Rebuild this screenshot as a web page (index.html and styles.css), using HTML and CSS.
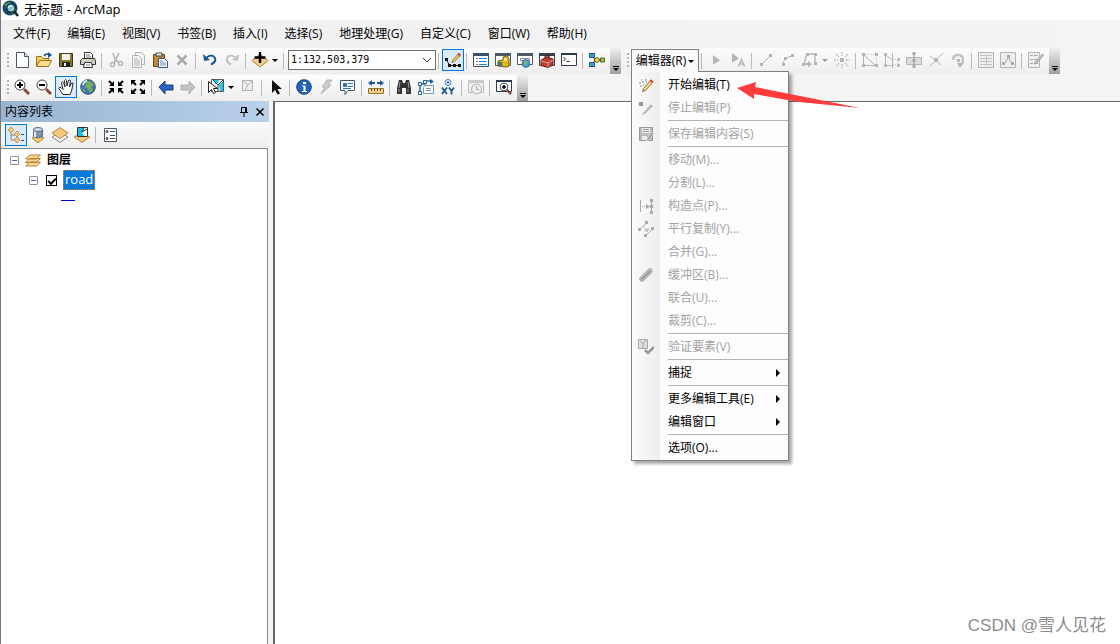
FILE: index.html
```html
<!DOCTYPE html>
<html lang="zh-CN">
<head>
<meta charset="utf-8">
<title>无标题 - ArcMap</title>
<link rel="stylesheet" href="styles.css">
</head>
<body>
<div class="app">
  <header class="titlebar">
    <svg class="logo" viewBox="0 0 18 18"><circle cx="8" cy="8" r="7.5" fill="#17476b"/><path d="M3 4l4-2 3 2-2 3-4 1zM8 9l4-3 2 4-4 4z" fill="#55a05b"/><circle cx="9" cy="8" r="4.2" fill="#a6e2f5" fill-opacity=".75" stroke="#08263e" stroke-width="1.3"/><path d="M12 11l4 5" stroke="#222" stroke-width="2.6"/><path d="M6 8q1-3 4-2" stroke="#fff" fill="none"/></svg>
    <h1 class="title">无标题 - ArcMap</h1>
  </header>

  <nav class="menubar">
    <button class="menu">文件(F)</button>
    <button class="menu">编辑(E)</button>
    <button class="menu">视图(V)</button>
    <button class="menu">书签(B)</button>
    <button class="menu">插入(I)</button>
    <button class="menu">选择(S)</button>
    <button class="menu">地理处理(G)</button>
    <button class="menu">自定义(C)</button>
    <button class="menu">窗口(W)</button>
    <button class="menu">帮助(H)</button>
  </nav>

  <div class="toolrows">
    <div class="toolrow">
      <div class="strip">
        <span class="grip"></span>
        <button class="tool" aria-label="新建"><svg viewBox="0 0 16 16"><path d="M2.500.5h8l4 4v11h-12z" fill="#fff" stroke="#4a5568"/><path d="M10.500.5v4h4" fill="#dce6f2" stroke="#4a5568"/></svg></button>
        <button class="tool" aria-label="打开"><svg viewBox="0 0 16 16"><path d="M.5 14.500v-10h5l1.500 2h6v3" fill="#f3cf68" stroke="#9a7416"/><path d="M.5 14.500l3-6h12l-3 6z" fill="#fbe08c" stroke="#9a7416"/><path d="M8 4q2-3 5-1.500" fill="none" stroke="#174f86" stroke-width="1.500"/><path d="M12 0l4 3-4 3z" fill="#174f86"/></svg></button>
        <button class="tool" aria-label="保存"><svg viewBox="0 0 16 16"><path d="M1.500 1.500h13v13h-13z" fill="#8c7728" stroke="#40391b"/><path d="M4 2h8v6H4z" fill="#f4f3e9"/><path d="M4 10h8v5H4z" fill="#222"/><path d="M6 11h2v3H6z" fill="#eee"/></svg></button>
        <button class="tool" aria-label="打印"><svg viewBox="0 0 16 16"><path d="M4.500 6.500v-6h6l2 2v4" fill="#fff" stroke="#333"/><path d="M2.500 6.500h12l1 2v4h-15v-4z" fill="#d2d2cc" stroke="#333"/><path d="M4.500 10.500h7l1 5h-9z" fill="#fff" stroke="#333"/><path d="M6 3h4M6 5h5M6 13h4" stroke="#777"/><path d="M12 8h2v1h-2z" fill="#dca52a"/></svg></button>
        <span class="sep"></span>
        <button class="tool" disabled aria-label="剪切"><svg viewBox="0 0 16 16" fill="none" stroke="#b4b4b4" stroke-width="1.500"><path d="M5 1l3 9M11 1L6 11M8 8l3 3"/><circle cx="4.500" cy="12.500" r="2"/><circle cx="12.500" cy="11.500" r="2"/></svg></button>
        <button class="tool" disabled aria-label="复制"><svg viewBox="0 0 16 16" fill="#f3f3f3" stroke="#b4b4b4"><path d="M5.500.5h6l3 3v9h-9z"/><path d="M2.500 3.500h6l3 3v9h-9z"/><path d="M4 7h4M4 9h6M4 11h6M4 13h6"/></svg></button>
        <button class="tool" aria-label="粘贴"><svg viewBox="0 0 16 16"><path d="M1.500 2.500h11v12h-11z" fill="#c08a3a" stroke="#6c451a"/><path d="M4 1h6v3H4z" fill="#eee" stroke="#444"/><path d="M6.500 6.500h6l3 3v6h-9z" fill="#fff" stroke="#35577e"/><path d="M8 9h3M8 11h6M8 13h6" stroke="#5f85af"/></svg></button>
        <button class="tool" disabled aria-label="删除"><svg viewBox="0 0 16 16"><path d="M3.500 3.500l9 9M12.500 3.500l-9 9" stroke="#aaa" stroke-width="2.500"/></svg></button>
        <span class="sep"></span>
        <button class="tool" aria-label="撤消"><svg viewBox="0 0 16 16"><path d="M4 6q6-5 9 0 1.500 4-4 6.500" fill="none" stroke="#1e5a98" stroke-width="2"/><path d="M1 2l1 7 6-1z" fill="#1e5a98"/></svg></button>
        <button class="tool" disabled aria-label="恢复"><svg viewBox="0 0 16 16"><path d="M12 6q-6-5-9 0-1.500 4 4 6.500" fill="none" stroke="#c3c3c3" stroke-width="2"/><path d="M15 2l-1 7-6-1z" fill="#c3c3c3"/></svg></button>
        <span class="sep"></span>
        <button class="tool tool-drop" aria-label="添加数据"><svg viewBox="0 0 16 16"><path d="M0 8.500l8-6 8 6-8 6.500z" fill="#f5cf83" stroke="#ad8440"/><path d="M8 0v11M2.500 5.500h11" stroke="#000" stroke-width="2.400"/></svg><span class="caret"></span></button>
        <span class="sep"></span>
        <label class="scale"><select class="scale-select" aria-label="地图比例"><option>1:132,503,379</option></select><svg class="scale-arrow" viewBox="0 0 10 6"><path d="M1 1l4 4 4-4" fill="none" stroke="#444"/></svg></label>
        <span class="sep"></span>
        <button class="tool tool-on" aria-label="编辑器工具条"><svg viewBox="0 0 16 16"><path d="M1.500 7.500l3 6h9" fill="none" stroke="#222"/><path d="M0 6h3v3H0zM3 12h3v3H3zM8 12h3v3H8zM13 12h3v3h-3z" fill="#111"/><path d="M7.500 8.500l6-7 2 2-6 6-2.500 1z" fill="#f3c66a" stroke="#7f5b30" stroke-width=".7"/><path d="M12.500 2.500l1.500-2 2 2-1.500 2z" fill="#d85347"/></svg></button>
        <span class="sep"></span>
        <button class="tool" aria-label="内容列表"><svg viewBox="0 0 16 16"><path d="M.5 1.500h15v13H.5z" fill="#fff" stroke="#38516f"/><path d="M0 1h16v3H0z" fill="#38516f"/><path d="M3 6.500h2M3 9.500h2M3 12.500h2" stroke="#e04e35"/><path d="M6 6.500h8M6 9.500h7M6 12.500h8" stroke="#1686e0"/></svg></button>
        <button class="tool" aria-label="目录"><svg viewBox="0 0 16 16"><path d="M.5 1.500h15v12H.5z" fill="#fff" stroke="#4b5968"/><path d="M0 1h16v3H0z" fill="#4b5968"/><path d="M8 5l4-1 2 2v8l-3 1-8-1V9l5-1z" fill="#e2b51d" stroke="#7a6212"/><path d="M9 6h3v3H9z" fill="#fae896"/><circle cx="5" cy="12" r="2.500" fill="#51796b"/></svg></button>
        <button class="tool" aria-label="搜索"><svg viewBox="0 0 16 16"><path d="M.5 1.500h15v11H.5z" fill="#fff" stroke="#4b5968"/><path d="M0 1h16v3H0z" fill="#4b5968"/><path d="M3.500 6.500h9v2h-9z" fill="#fff" stroke="#888"/><circle cx="9" cy="11.500" r="4" fill="#4c95cc" stroke="#245580" stroke-width=".6"/><path d="M7 9l3 0 1 2-3 3z" fill="#79b975"/></svg></button>
        <button class="tool" aria-label="工具箱"><svg viewBox="0 0 16 16"><path d="M.5 1.500h15v12H.5z" fill="#fff" stroke="#384050"/><path d="M0 1h16v3H0z" fill="#384050"/><path d="M2 8l6-3 6 2v6l-5 2.500-7-2z" fill="#b73f32" stroke="#702019"/><path d="M2 9l7 2 5-3M9 11v4" fill="none" stroke="#e9a69b"/><path d="M6 6V4h4v2" fill="none" stroke="#501"/></svg></button>
        <button class="tool" aria-label="Python"><svg viewBox="0 0 16 16"><path d="M.5 1.500h15v12H.5z" fill="#fff" stroke="#30384c"/><path d="M0 1h16v2H0z" fill="#30384c"/><path d="M2.500 5l2 2-2 2M5.500 9.500h3" fill="none" stroke="#222"/></svg></button>
        <span class="sep"></span>
        <button class="tool" aria-label="模型构建器"><svg viewBox="0 0 16 16"><path d="M3 3l3 5-3 5M6 8h7" fill="none" stroke="#333"/><path d="M.5 1.500h5v4h-5zM.5 10.500h5v4h-5z" fill="#429bd3" stroke="#14588a"/><circle cx="8" cy="8" r="2.300" fill="#ffe35b" stroke="#5b4a12"/><path d="M11.500 6h4v4h-4z" fill="#9bc24e" stroke="#476d1b"/></svg></button>
        <button class="more" aria-label="工具条选项"></button>
      </div>

      <div class="strip">
        <span class="grip"></span>
        <div class="editor">
          <button class="editor-button" aria-haspopup="true" aria-expanded="true">编辑器(R)<span class="caret"></span></button>
          <div class="dropdown" role="menu">
            <button class="item" role="menuitem"><svg class="item-icon" viewBox="0 0 16 16"><path d="M5.500 11.500l7-8 2 2-7 8-3 1z" fill="#ffd988" stroke="#6b5020" stroke-width=".8"/><path d="M11.500 4L13 2.300l2.500 2L14 6z" fill="#d04a3a"/><path d="M1 6h2M4 5h2M7 3h2M2 9h2M5 8h1M8 5h1M3 3h1" stroke="#888"/></svg>开始编辑(T)</button>
            <button class="item" role="menuitem" disabled><svg class="item-icon" viewBox="0 0 16 16"><path d="M1 2h4v4H1z" fill="#999"/><path d="M5 13l8-9 2 2-8 8-3 1z" fill="#bbb"/></svg>停止编辑(P)</button>
            <hr class="rule">
            <button class="item" role="menuitem" disabled><svg class="item-icon" viewBox="0 0 16 16"><path d="M1.500 1.500h13v13h-13z" fill="#bbb" stroke="#999"/><path d="M4 2h8v5H4zM4 10h5v4H4z" fill="#eee"/><path d="M5 3.500h6M5 5.500h6" stroke="#999"/><path d="M9 13l5-7 2 1-5 7-3 1z" fill="#999" stroke="#eee" stroke-width=".6"/></svg>保存编辑内容(S)</button>
            <hr class="rule">
            <button class="item" role="menuitem" disabled>移动(M)...</button>
            <button class="item" role="menuitem" disabled>分割(L)...</button>
            <button class="item" role="menuitem" disabled><svg class="item-icon" viewBox="0 0 16 16"><path d="M2.500 2v12M13.500 2v12" stroke="#aaa"/><path d="M4 8.500h5" stroke="#aaa" stroke-dasharray="1 1"/><path d="M8 6l4 2.500L8 11zM12 1h3v3h-3zM12 7h3v3h-3zM12 13h3v3h-3z" fill="#aaa"/></svg>构造点(P)...</button>
            <button class="item" role="menuitem" disabled><svg class="item-icon" viewBox="0 0 16 16"><path d="M2 8l7-6M8 14l7-6" stroke="#aaa"/><path d="M6 7l4 3M10 7v3H7" fill="none" stroke="#aaa"/><path d="M0 7h3v3H0zM7 0h3v3H7zM6 13h3v3H6zM13 6h3v3h-3z" fill="#aaa"/></svg>平行复制(Y)...</button>
            <button class="item" role="menuitem" disabled>合并(G)...</button>
            <button class="item" role="menuitem" disabled><svg class="item-icon" viewBox="0 0 16 16"><path d="M4 12l8-8" stroke="#b5b5b5" stroke-width="5.500" stroke-linecap="round"/><path d="M4 12l8-8" stroke="#808080"/></svg>缓冲区(B)...</button>
            <button class="item" role="menuitem" disabled>联合(U)...</button>
            <button class="item" role="menuitem" disabled>裁剪(C)...</button>
            <hr class="rule">
            <button class="item" role="menuitem" disabled><svg class="item-icon" viewBox="0 0 16 16"><path d="M.5.5h9v9h-9z" fill="#ddd" stroke="#aaa"/><path d="M2 2l3 3 3-4M5 5v4" fill="none" stroke="#aaa"/><path d="M7 11l3 3 6-6" fill="none" stroke="#999" stroke-width="2.500"/></svg>验证要素(V)</button>
            <hr class="rule">
            <button class="item item-sub" role="menuitem">捕捉</button>
            <hr class="rule">
            <button class="item item-sub" role="menuitem">更多编辑工具(E)</button>
            <button class="item item-sub" role="menuitem">编辑窗口</button>
            <hr class="rule">
            <button class="item" role="menuitem">选项(O)...</button>
          </div>
        </div>
        <span class="sep"></span>
        <button class="tool" disabled aria-label="编辑工具"><svg viewBox="0 0 16 16"><path d="M5 3l7 5.500-7 4z" fill="#b4b4b4"/></svg></button>
        <button class="tool" disabled aria-label="编辑注记"><svg viewBox="0 0 16 16"><path d="M2 1l7 5.500-7 4z" fill="#b4b4b4"/><path d="M8.500 14.500l3-7 3 7M9.500 12h4" fill="none" stroke="#b4b4b4" stroke-width="1.500"/></svg></button>
        <span class="sep"></span>
        <button class="tool" disabled aria-label="直线段"><svg viewBox="0 0 16 16"><path d="M3 13L13 3" stroke="#b4b4b4"/><path d="M2 11h3v3H2zM11 2h3v3h-3z" fill="#b4b4b4"/></svg></button>
        <button class="tool" disabled aria-label="弧段"><svg viewBox="0 0 16 16"><path d="M3 13q0-8 10-9" fill="none" stroke="#b4b4b4"/><path d="M2 11h3v3H2zM4 5h3v3H4zM11 2h3v3h-3z" fill="#b4b4b4"/></svg></button>
        <button class="tool tool-drop" disabled aria-label="追踪"><svg viewBox="0 0 16 16"><path d="M2 12L5 2h8v9M2 12h4" fill="none" stroke="#b4b4b4" stroke-width="1.300"/><path d="M0 11h3v3H0zM4 1h3v3H4zM12 1h3v3h-3zM12 10h3v3h-3z" fill="#b4b4b4"/><path d="M7 9v6M4 12h6" stroke="#999"/></svg><span class="caret caret-off"></span></button>
        <button class="tool" disabled aria-label="点"><svg viewBox="0 0 16 16"><path d="M6 6h4v4H6z" fill="#b4b4b4"/><path d="M8 0v4M8 12v4M0 8h4M12 8h4M2 2l3 3M11 11l3 3M14 2l-3 3M5 11l-3 3" stroke="#c3c3c3" stroke-width="1.500" stroke-dasharray="2 1"/></svg></button>
        <span class="sep"></span>
        <button class="tool" disabled aria-label="编辑折点"><svg viewBox="0 0 16 16"><path d="M1.500 13.500v-11l12 11z" fill="none" stroke="#b4b4b4"/><path d="M3 2.500h11.500v11" fill="none" stroke="#ccc" stroke-dasharray="1 1"/><path d="M0 1h3v3H0zM0 12h3v3H0zM13 12h3v3h-3zM13 1h3v3h-3z" fill="#b4b4b4"/></svg></button>
        <button class="tool" disabled aria-label="整形要素"><svg viewBox="0 0 16 16"><path d="M1.500 2v11.500h6M1.500 3l6 4M8.500 1v15" fill="none" stroke="#b4b4b4"/><path d="M9 7l5 1v5H9" fill="none" stroke="#bbb" stroke-dasharray="1 1"/><path d="M0 1h3v3H0zM0 12h3v3H0zM13 6h3v3h-3zM13 12h3v3h-3z" fill="#bbb"/></svg></button>
        <button class="tool" disabled aria-label="裁剪面"><svg viewBox="0 0 16 16"><path d="M.5 5.500h15v7H.5z" fill="#ddd" stroke="#b4b4b4"/><path d="M8 1v15" stroke="#aaa" stroke-width="1.500"/><path d="M6.500 0h3v3h-3zM6.500 7h3v3h-3zM6.500 13h3v3h-3z" fill="#aaa"/></svg></button>
        <button class="tool" disabled aria-label="分割"><svg viewBox="0 0 16 16"><path d="M2 14L15 1" stroke="#b4b4b4"/><path d="M2 4l11 9" stroke="#b4b4b4" stroke-dasharray="4 1"/><path d="M6 6h4v4H6z" fill="#b4b4b4"/></svg></button>
        <button class="tool" disabled aria-label="旋转"><svg viewBox="0 0 16 16"><path d="M3 8q0-5 5-5t5 5q0 4-4 6" fill="none" stroke="#c3c3c3" stroke-width="2.500"/><path d="M7 11l6 0-3 5zM7 7h3v3H7z" fill="#b4b4b4"/></svg></button>
        <span class="sep"></span>
        <button class="tool" disabled aria-label="属性"><svg viewBox="0 0 16 16"><path d="M.5.5h15v15H.5z" fill="#eee" stroke="#b4b4b4"/><path d="M2 3.500h12M2 6.500h12M2 9.500h12M2 12.500h12M8.500 2v12" stroke="#c3c3c3"/></svg></button>
        <button class="tool" disabled aria-label="草图属性"><svg viewBox="0 0 16 16"><path d="M.5.5h15v15H.5z" fill="#eee" stroke="#b4b4b4"/><path d="M3 12l3-2 2-5 3 5 2 2" fill="none" stroke="#aaa"/><path d="M2 10h3v3H2zM7 3h3v3H7zM11 10h3v3h-3z" fill="#aaa"/></svg></button>
        <span class="sep"></span>
        <button class="tool" disabled aria-label="创建要素"><svg viewBox="0 0 16 16"><path d="M.5.5h11v15H.5z" fill="#eee" stroke="#b4b4b4"/><path d="M2 3.500h3M2 7.500h3M2 11.500h3M6 3.500h4M6 7.500h3M6 11.500h4" stroke="#aaa"/><path d="M7 10l7-8 2 1-7 8-3 1z" fill="#bbb" stroke="#999" stroke-width=".5"/></svg></button>
        <button class="more" aria-label="工具条选项"></button>
      </div>
    </div>

    <div class="toolrow">
      <div class="strip">
        <span class="grip"></span>
        <button class="tool" aria-label="放大"><svg viewBox="0 0 16 16"><path d="M10 10l5 5" stroke="#8a4b3c" stroke-width="3"/><circle cx="6" cy="6" r="5" fill="#fff" stroke="#444"/><path d="M6 3v6M3 6h6" stroke="#000" stroke-width="2"/></svg></button>
        <button class="tool" aria-label="缩小"><svg viewBox="0 0 16 16"><path d="M10 10l5 5" stroke="#8a4b3c" stroke-width="3"/><circle cx="6" cy="6" r="5" fill="#fff" stroke="#444"/><path d="M3 6h6" stroke="#000" stroke-width="2"/></svg></button>
        <button class="tool tool-on" aria-label="平移"><svg viewBox="0 0 16 16"><path d="M5 15.500L1 9.500q0-2 2-1l2 2L3.500 3.500q1-2 2 0L7 8 6.500 1.500q1-2 2 0L9 7l1.500-5.500q2-1 2 0L11.500 8l2-4q2-.5 1.500 1L13.500 12l-1.500 3.500z" fill="#fff" stroke="#222"/></svg></button>
        <button class="tool" aria-label="全图"><svg viewBox="0 0 16 16"><circle cx="8" cy="8" r="7.300" fill="#3f78b8" stroke="#394d69"/><path d="M7 2l5 1 2 3-3 2 2 3-3 3-2-4-3-2zM1 9l4 2v3z" fill="#74b050"/><path d="M3 6q1-4 4-4" stroke="#d4edf9" stroke-width="2" fill="none"/></svg></button>
        <span class="sep"></span>
        <button class="tool" aria-label="固定比例放大"><svg viewBox="0 0 16 16"><path d="M1 2l4 4M15 2l-4 4M1 14l4-4M15 14l-4-4" stroke="#000" stroke-width="2"/><path d="M6 2v5H1zM10 2v5h5zM6 14V9H1zM10 14V9h5z"/></svg></button>
        <button class="tool" aria-label="固定比例缩小"><svg viewBox="0 0 16 16"><path d="M2 2l4 4M14 2l-4 4M2 14l4-4M14 14l-4-4" stroke="#000" stroke-width="2"/><path d="M1 1v5l5-5zM15 1v5l-5-5zM1 15v-5l5 5zM15 15v-5l-5 5z"/></svg></button>
        <span class="sep"></span>
        <button class="tool" aria-label="后退"><svg viewBox="0 0 16 16"><path d="M1 8l6-6v4h8v5H7v4z" fill="#2b62c4" stroke="#183b88"/></svg></button>
        <button class="tool" disabled aria-label="前进"><svg viewBox="0 0 16 16"><path d="M15 8L9 2v4H1v5h8v4z" fill="#c3c3c3" stroke="#b1b1b1"/></svg></button>
        <span class="sep"></span>
        <button class="tool tool-drop" aria-label="选择要素"><svg viewBox="0 0 16 16"><path d="M3.500.5h12v12h-12z" fill="#fff" stroke="#555"/><path d="M5 1h6l-1 3-3 1zM11 6l4-4v10h-3z" fill="#22c7e8"/><path d="M5 1l5 5 5-5M10 6v6" fill="none" stroke="#345"/><path d="M.5 2.500v11l3-3 2 4 2-1-2-4h4z" fill="#fff" stroke="#222"/></svg><span class="caret"></span></button>
        <button class="tool" disabled aria-label="清除选择"><svg viewBox="0 0 16 16"><path d="M2.500 1.500h10v10h-10z" fill="#eee" stroke="#b4b4b4"/><path d="M3 2l5 4 4-4M8 6l-3 5" fill="none" stroke="#b4b4b4"/></svg></button>
        <span class="sep"></span>
        <button class="tool" aria-label="选择元素"><svg viewBox="0 0 16 16"><path d="M4 1v13l3-3 2.500 4.500 2.500-1L9.500 10H14z" fill="#111"/></svg></button>
        <span class="sep"></span>
        <button class="tool" aria-label="识别"><svg viewBox="0 0 16 16"><circle cx="8" cy="8" r="7.300" fill="#2462be" stroke="#133e82"/><path d="M7 3h3v2H7zM6 6.500h3.500V12H11v1H6v-1h1.500V7.500H6z" fill="#fff"/></svg></button>
        <button class="tool" disabled aria-label="超链接"><svg viewBox="0 0 16 16"><path d="M9 1h5l-4 5h3L3 15l4-7H4z" fill="#ccc" stroke="#b4b4b4"/></svg></button>
        <button class="tool" aria-label="HTML 弹出窗口"><svg viewBox="0 0 16 16"><path d="M.5 1.500h14v10H8l-3 4v-4H.5z" fill="#fff" stroke="#425464"/><path d="M3 4h4v4H3z" fill="#237bc2"/><path d="M8 4.500h5M8 7.500h5M3 9.500h8" stroke="#237bc2"/></svg></button>
        <span class="sep"></span>
        <button class="tool" aria-label="测量"><svg viewBox="0 0 16 16"><path d="M0 4l4-3v2h3v2H4v2zM16 4l-4-3v2H9v2h3v2z" fill="#205c9d"/><path d="M.5 9.500h15v5H.5z" fill="#f2d08b" stroke="#987031"/><path d="M3.500 10v2M6.500 10v2M9.500 10v2M12.500 10v2" stroke="#765321"/></svg></button>
        <span class="sep"></span>
        <button class="tool" aria-label="查找"><svg viewBox="0 0 16 16"><path d="M3 1h3l1 3h2l1-3h3l2 8v6h-5V9H6v6H1V9z" fill="#333"/><path d="M4 3L3 9M12 3l1 6M3 10v3M12 10v3" stroke="#999"/></svg></button>
        <button class="tool" aria-label="查找路径"><svg viewBox="0 0 16 16"><path d="M2 12V5h5V2h6" fill="none" stroke="#2072a5" stroke-width="1.500"/><path d="M12 0l4 2.500L12 5z" fill="#205c9d"/><path d="M.5 3.500h3v3h-3zM.5 12.500h3v3h-3zM5.500 1.500h3v3h-3z" fill="#fff" stroke="#205c9d"/><path d="M5.500 8.500l1-2h9v8h-10z" fill="#fff" stroke="#7f96a6"/><path d="M8 9.500h5M8 11.500h5" stroke="#7f96a6"/></svg></button>
        <button class="tool" aria-label="转到 XY"><svg viewBox="0 0 16 16"><circle cx="8" cy="3.500" r="3" fill="#fff" stroke="#277fc0"/><circle cx="8" cy="3.500" r="1.200" fill="#205c9d"/><path d="M2 8.500l5 6.500M7 8.500L2 15M9 8.500l2.500 3.500L14 8.500M11.500 12v3.500" fill="none" stroke="#19588c" stroke-width="1.800"/></svg></button>
        <span class="sep"></span>
        <button class="tool" disabled aria-label="时间滑块"><svg viewBox="0 0 16 16"><path d="M.5 1.500h15v12H.5z" fill="#eee" stroke="#bbb"/><path d="M0 1h16v3H0z" fill="#ccc"/><circle cx="8.500" cy="10" r="5" fill="#eee" stroke="#b4b4b4"/><path d="M8.500 7v3.500h3" fill="none" stroke="#aaa"/></svg></button>
        <span class="sep"></span>
        <button class="tool" aria-label="查看器窗口"><svg viewBox="0 0 16 16"><path d="M.5 1.500h15v11H.5z" fill="#fff" stroke="#30384c"/><path d="M0 1h16v2H0z" fill="#30384c"/><path d="M11 11l4 4" stroke="#8a4b3c" stroke-width="2.500"/><circle cx="8" cy="8" r="3.800" fill="#fff" stroke="#444"/><path d="M8 6v4M6 8h4" stroke="#000" stroke-width="1.500"/></svg></button>
        <button class="more" aria-label="工具条选项"></button>
      </div>
    </div>
  </div>

  <main class="work">
    <aside class="toc">
      <div class="toc-head">
        <h2 class="toc-title">内容列表</h2>
        <button class="toc-action" aria-label="自动隐藏"><svg viewBox="0 0 10 10"><path d="M2.500 5.500v-5h5v5M6.500 1v5M1 5.500h8M5 6v4" fill="none" stroke="#000"/></svg></button>
        <button class="toc-action" aria-label="关闭"><svg viewBox="0 0 10 10"><path d="M1.500 1.500l7 7M8.500 1.500l-7 7" stroke="#000" stroke-width="1.500"/></svg></button>
      </div>
      <div class="toc-tools">
        <button class="tool tool-on" aria-label="按绘制顺序列出"><svg viewBox="0 0 16 16"><path d="M3 4v9h5M3 8h5" fill="none" stroke="#888"/><path d="M0 3l3-3 3 3-3 3zM6 7l3-3 3 3-3 3zM6 13l3-3 3 3-3 3z" fill="#f5c96f" stroke="#ad8440" stroke-width=".7"/><path d="M13 7.500h3M13 13.500h3" stroke="#205c9d"/></svg></button>
        <button class="tool" aria-label="按源列出"><svg viewBox="0 0 16 16"><path d="M2 11l6-3 6 3-6 5z" fill="#f5c96f" stroke="#ad8440"/><path d="M3.500 2.500v7q4.500 3 9 0v-7z" fill="#8292ad" stroke="#5c6b86"/><path d="M5 4v6" stroke="#dfe8f5" stroke-width="2"/><ellipse cx="8" cy="2.500" rx="4.500" ry="2" fill="#cfd9e8" stroke="#5c6b86"/></svg></button>
        <button class="tool" aria-label="按可见性列出"><svg viewBox="0 0 16 16"><path d="M0 10l8-5 8 5-8 5.500z" fill="#eee" stroke="#888"/><path d="M0 6l8-5.500L16 6l-8 5.500z" fill="#f5c978" stroke="#b78b45"/></svg></button>
        <button class="tool" aria-label="按选择列出"><svg viewBox="0 0 16 16"><path d="M0 10l8-4 8 4-8 5.500z" fill="#f5c978" stroke="#b78b45"/><path d="M3.500.5h10v9h-10z" fill="#fff" stroke="#333"/><path d="M4 1h6L8 5l2 4H4z" fill="#19bfe0"/><path d="M10 1L8 5l5-3" fill="none" stroke="#333"/></svg></button>
        <span class="sep"></span>
        <button class="tool" aria-label="选项"><svg viewBox="0 0 16 16"><path d="M2.500 1.500h12v13h-12z" fill="#fff" stroke="#4b5968"/><path d="M8 4.500h5M8 8.500h5M8 11.500h5" stroke="#456"/><circle cx="5" cy="4.500" r="1" fill="none" stroke="#222"/><circle cx="5" cy="11.500" r="1" fill="none" stroke="#222"/></svg></button>
      </div>
      <div class="tree">
        <div class="node">
          <button class="twist" aria-label="折叠图层"></button>
          <svg class="layers" viewBox="0 0 16 14"><path d="M.5 13l4-4h11l-4 4zM.5 9.500l4-4h11l-4 4zM.5 6l4-4h11l-4 4z" fill="#f8d48c" stroke="#b08338"/></svg>
          <span class="node-name">图层</span>
        </div>
        <div class="node node-child">
          <button class="twist" aria-label="折叠 road"></button>
          <input class="check" type="checkbox" id="road" checked>
          <label class="layer-name" for="road">road</label>
        </div>
        <div class="symbol"></div>
      </div>
    </aside>
    <section class="map" aria-label="地图"></section>
  </main>

  <svg class="pointer" viewBox="0 0 124 28"><path d="M1 6l19-6-1 5 45 9 60 12-61-6-45-8v5z" fill="#ff3b3b"/></svg>
  <p class="watermark">CSDN @雪人见花</p>
</div>
</body>
</html>
```
FILE: styles.css
```css
*,
*::before,
*::after {
  box-sizing: border-box;
}

body {
  margin: 0;
  font: 12px/16px "Open Sans", "Noto Sans CJK SC", sans-serif;
  color: #000;
}

button {
  margin: 0;
  padding: 0;
  border: 0;
  background: none;
  font: inherit;
  color: inherit;
}

h1,
h2,
p {
  margin: 0;
  font-size: 12px;
  font-weight: 400;
}

svg {
  display: block;
}

.app {
  position: relative;
  display: flex;
  flex-direction: column;
  min-height: 100vh;
  border-left: 1px solid #777;
  background: #f4f4f4;
  overflow: hidden;
}

.titlebar {
  display: flex;
  align-items: center;
  gap: 4px;
  height: 20px;
  padding: 0 1px 2px;
  background: #fff;
}

.title {
  font-size: 13px;
}

.logo {
  width: 18px;
  height: 18px;
}

.menubar {
  display: flex;
  gap: 1px;
  height: 28px;
  padding-left: 4px;
  background: linear-gradient(90deg, #f0f0f0, #f4f4f4);
}

.menu {
  padding: 0 8px;
}

.toolrows {
  display: flex;
  flex-direction: column;
  gap: 1px;
}

.toolrow {
  display: flex;
  gap: 4px;
  padding-left: 4px;
}

.strip {
  display: flex;
  align-items: flex-start;
  height: 26px;
  padding-top: 1px;
  border-radius: 3px 0 0 3px;
  background: linear-gradient(#fcfcfc, #eee);
}

.grip {
  width: 2px;
  height: 16px;
  margin: 4px 2px;
  background: repeating-linear-gradient(#b5b5b5 0 2px, transparent 2px 4px);
}

.tool {
  display: flex;
  flex: none;
  align-items: center;
  justify-content: center;
  width: 22px;
  height: 22px;
}

.tool svg {
  width: 16px;
  height: 16px;
}

.tool-on {
  border: 1px solid #0078d7;
  background: #dcebf7;
}

.tool-drop {
  gap: 4px;
  width: 32px;
}

.caret {
  border: 3px solid transparent;
  border-top-color: #000;
  border-bottom: 0;
}

.caret-off {
  border-top-color: #999;
}

.sep {
  flex: none;
  width: 1px;
  height: 16px;
  margin: 4px 3px 0 2px;
  background: #b9b9b9;
}

.more {
  position: relative;
  align-self: stretch;
  width: 11px;
  margin: -1px 0 0 2px;
  background: linear-gradient(#eee, #a0a0a0);
}

.more::before,
.more::after {
  content: "";
  position: absolute;
  left: 3px;
  width: 6px;
}

.more::before {
  bottom: 7px;
  height: 1px;
  background: #000;
}

.more::after {
  bottom: 3px;
  border: 3px solid transparent;
  border-top-color: #000;
  border-bottom: 0;
}

.scale {
  position: relative;
  width: 148px;
  margin-left: 1px;
}

.scale-select {
  display: block;
  width: 100%;
  height: 20px;
  margin-top: 1px;
  padding: 0 2px;
  border: 1px solid #707070;
  border-radius: 0;
  background: #fff;
  font: 10px/16px "DejaVu Sans Mono", monospace;
  color: #000;
  appearance: none;
}

.scale-arrow {
  position: absolute;
  top: 8px;
  right: 4px;
  width: 10px;
  height: 6px;
}

.editor {
  position: relative;
  z-index: 1;
}

.editor-button {
  position: relative;
  z-index: 1;
  display: flex;
  align-items: center;
  justify-content: center;
  gap: 2px;
  width: 68px;
  height: 23px;
  border: 1px solid #808080;
  border-bottom: 0;
  background: #fafafa;
}

.dropdown {
  position: absolute;
  top: 22px;
  left: 0;
  width: 158px;
  padding: 1px 0;
  border: 1px solid #808080;
  background: linear-gradient(90deg, #fcfcfc, #ededed 28px, #fdfdfd 28px);
  box-shadow: 3px 3px 3px rgba(0, 0, 0, 0.35);
}

.item {
  display: flex;
  align-items: center;
  width: 100%;
  height: 23px;
  padding-left: 36px;
  white-space: nowrap;
}

.item:disabled {
  color: #a3a3a3;
}

.item-icon {
  width: 16px;
  height: 16px;
  margin: 0 14px 0 -30px;
}

.item-sub::after {
  content: "";
  margin: 0 8px 0 auto;
  border: 4px solid transparent;
  border-left-color: #000;
  border-right: 0;
}

.rule {
  height: 1px;
  margin: 1px 0 1px 36px;
  border: 0;
  background: #b4b4b4;
}

.work {
  display: flex;
  flex: 1;
  gap: 4px;
}

.toc {
  display: flex;
  flex: none;
  flex-direction: column;
  width: 268px;
}

.toc-head {
  display: flex;
  align-items: center;
  gap: 6px;
  height: 21px;
  padding: 0 4px;
  background: linear-gradient(90deg, #99b4d1, #b9d1ea);
}

.toc-title {
  flex: 1;
}

.toc-action svg {
  width: 10px;
  height: 10px;
}

.toc-tools {
  display: flex;
  align-items: center;
  height: 26px;
  padding-left: 4px;
  background: linear-gradient(#fafafa, #eee);
}

.toc-tools .sep {
  margin-top: 0;
}

.tree {
  flex: 1;
  margin-right: 1px;
  padding: 1px 0;
  border: solid #828790;
  border-width: 1px 1px 0 0;
  background: #fff;
}

.node {
  display: flex;
  align-items: center;
  gap: 6px;
  height: 20px;
  padding-left: 9px;
}

.node-child {
  padding-left: 28px;
}

.twist {
  width: 9px;
  height: 9px;
  border: 1px solid #919191;
  border-radius: 1px;
  background: linear-gradient(#4b63a7, #4b63a7) center / 5px 1px no-repeat #fff;
}

.layers {
  width: 16px;
  height: 14px;
}

.node-name {
  font-weight: 700;
}

.check {
  display: grid;
  place-content: center;
  width: 11px;
  height: 11px;
  margin: 0 0 0 2px;
  border: 1px solid #000;
  background: #fff;
  appearance: none;
}

.check:checked::before {
  content: "";
  width: 8px;
  height: 5px;
  border: solid #000;
  border-width: 0 0 2px 2px;
  transform: rotate(-45deg);
}

.layer-name {
  height: 20px;
  padding: 0 1px;
  border: 1px dotted #e8902f;
  background: #0078d7;
  font-size: 13px;
  line-height: 17px;
  color: #fff;
}

.symbol {
  width: 14px;
  height: 1px;
  margin: 10px 0 0 60px;
  background: #0000c0;
}

.map {
  flex: 1;
  border: solid #696969;
  border-width: 1px 0 0 2px;
  background: #fff;
}

.pointer {
  position: absolute;
  top: 82px;
  left: 735px;
  z-index: 2;
  width: 124px;
  height: 28px;
}

.watermark {
  position: absolute;
  right: 14px;
  bottom: 6px;
  font: 17px/24px "Liberation Sans", "Noto Sans CJK SC", sans-serif;
  color: #8c8c8c;
}
```
